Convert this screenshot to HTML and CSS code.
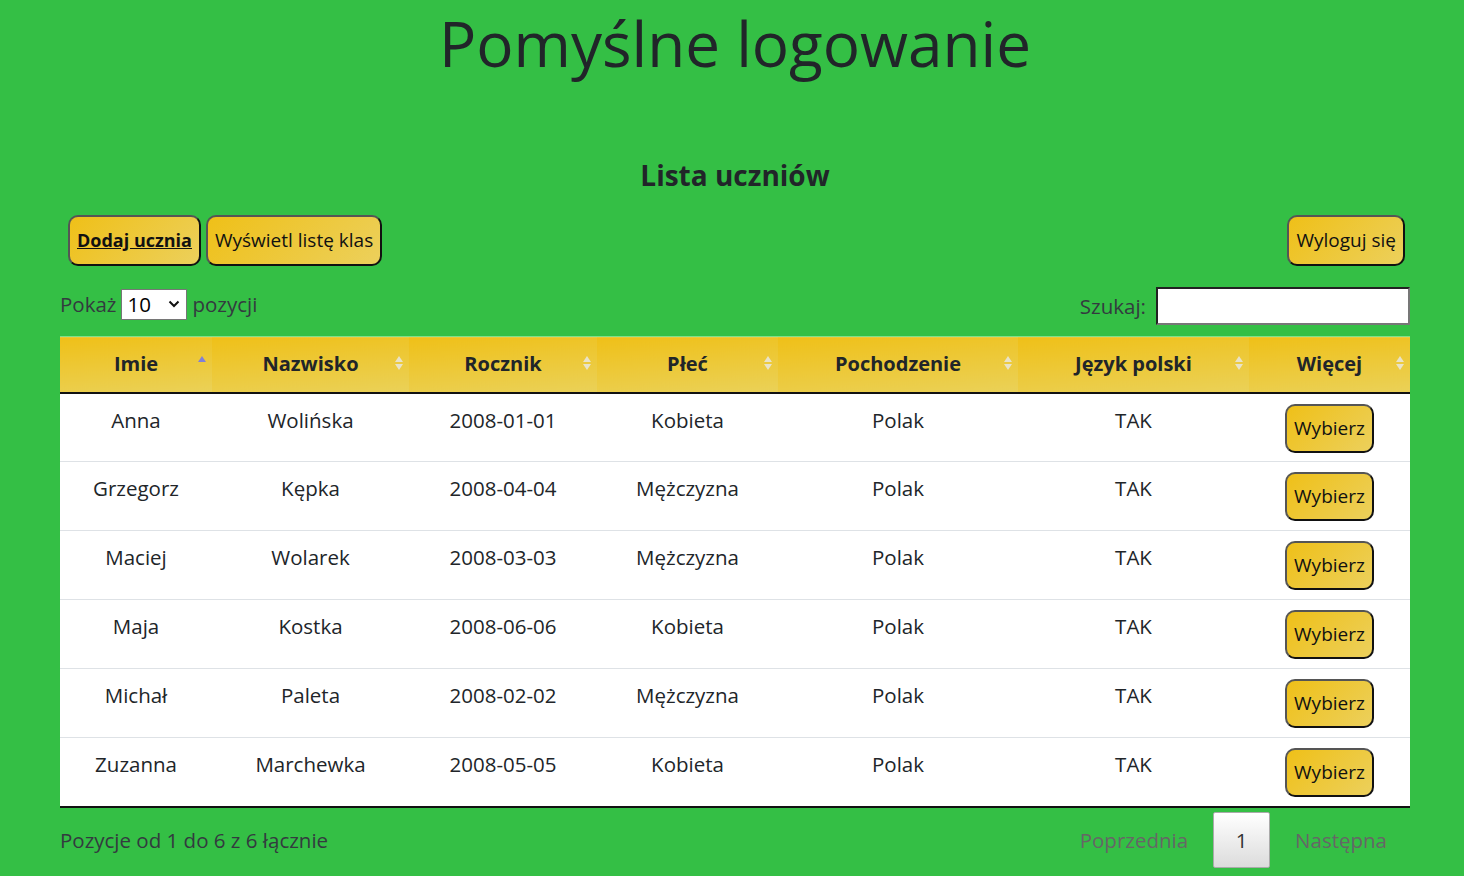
FILE: index.html
```html
<!DOCTYPE html>
<html lang="pl">
<head>
<meta charset="utf-8">
<title>Pomyślne logowanie</title>
<link rel="stylesheet" href="styles.css">
</head>
<body>
<div class="page">
  <h1 class="title">Pomyślne logowanie</h1>
  <h2 class="subtitle">Lista uczniów</h2>
  <div class="actions">
    <div class="actions-left">
      <button class="btn btn-active">Dodaj ucznia</button>
      <button class="btn">Wyświetl listę klas</button>
    </div>
    <button class="btn">Wyloguj się</button>
  </div>
  <div class="controls">
    <label class="length">Pokaż
      <span class="select"><span class="select-val">10</span><svg width="12" height="8" viewBox="0 0 12 8"><path d="M1.5 1.5 L6 6 L10.5 1.5" fill="none" stroke="#111" stroke-width="2"/></svg></span>
      pozycji</label>
    <label class="search">Szukaj: <span class="search-input"></span></label>
  </div>
  <table class="grid">
    <colgroup>
      <col style="width:152px"><col style="width:197px"><col style="width:188px"><col style="width:181px"><col style="width:240px"><col style="width:231px"><col style="width:161px">
    </colgroup>
    <thead>
      <tr>
        <th>Imie<span class="sort asc"></span></th>
        <th>Nazwisko<span class="sort"></span></th>
        <th>Rocznik<span class="sort"></span></th>
        <th>Płeć<span class="sort"></span></th>
        <th>Pochodzenie<span class="sort"></span></th>
        <th>Język polski<span class="sort"></span></th>
        <th>Więcej<span class="sort"></span></th>
      </tr>
    </thead>
    <tbody>
      <tr><td>Anna</td><td>Wolińska</td><td>2008-01-01</td><td>Kobieta</td><td>Polak</td><td>TAK</td><td><button class="btn btn-sm">Wybierz</button></td></tr>
      <tr><td>Grzegorz</td><td>Kępka</td><td>2008-04-04</td><td>Mężczyzna</td><td>Polak</td><td>TAK</td><td><button class="btn btn-sm">Wybierz</button></td></tr>
      <tr><td>Maciej</td><td>Wolarek</td><td>2008-03-03</td><td>Mężczyzna</td><td>Polak</td><td>TAK</td><td><button class="btn btn-sm">Wybierz</button></td></tr>
      <tr><td>Maja</td><td>Kostka</td><td>2008-06-06</td><td>Kobieta</td><td>Polak</td><td>TAK</td><td><button class="btn btn-sm">Wybierz</button></td></tr>
      <tr><td>Michał</td><td>Paleta</td><td>2008-02-02</td><td>Mężczyzna</td><td>Polak</td><td>TAK</td><td><button class="btn btn-sm">Wybierz</button></td></tr>
      <tr><td>Zuzanna</td><td>Marchewka</td><td>2008-05-05</td><td>Kobieta</td><td>Polak</td><td>TAK</td><td><button class="btn btn-sm">Wybierz</button></td></tr>
    </tbody>
  </table>
  <div class="footer">
    <div class="info">Pozycje od 1 do 6 z 6 łącznie</div>
    <div class="paging">
      <span class="page-link disabled">Poprzednia</span>
      <span class="page-current">1</span>
      <span class="page-link disabled">Następna</span>
    </div>
  </div>
</div>
</body>
</html>
```

FILE: styles.css
```css
* { box-sizing: border-box; }
html, body { margin: 0; padding: 0; }
body {
  background: #34bf45;
  color: #212529;
  font-family: "Open Sans", "Noto Sans", sans-serif;
  font-size: 20.5px;
  line-height: 30px;
  height: 876px;
  overflow: hidden;
}
.page {
  padding: 0 54px 0 60px;
}
.title {
  margin: 0;
  padding-top: 5px;
  font-size: 62px;
  line-height: 76px;
  font-weight: 400;
  text-align: center;
}
.subtitle {
  margin: 74px 0 0;
  font-size: 28px;
  line-height: 40px;
  font-weight: 700;
  text-align: center;
}
.actions {
  margin-top: 20px;
  display: flex;
  justify-content: space-between;
  padding: 0 5px 0 8px;
}
.actions-left { display: flex; gap: 5px; }
.btn {
  font-family: inherit;
  font-size: 19px;
  line-height: 30px;
  color: #111;
  padding: 8px 7px 9px;
  border: 2px solid;
  border-color: #555 #111 #111 #555;
  border-radius: 10px;
  background: linear-gradient(135deg, #efc018 0%, #ecd05c 100%);
  cursor: pointer;
}
.btn-active { font-weight: 700; text-decoration: underline; font-size: 18px; }
.btn-sm { padding: 7px 7px 8px; }
.controls {
  margin-top: 21px;
  display: flex;
  justify-content: space-between;
  align-items: flex-start;
  color: #333a3f;
}
.length { display: flex; align-items: center; gap: 5px; height: 32px; padding-top: 2px; }
.select {
  display: inline-flex;
  align-items: center;
  justify-content: space-between;
  width: 66px;
  height: 31px;
  background: #fff;
  border: 1px solid #767676;
  padding: 0 6px 0 5px;
  color: #000;
}
.search { display: flex; align-items: center; gap: 10px; padding-top: 0; }
.search-input {
  display: inline-block;
  width: 254px;
  height: 38px;
  background: #fff;
  border: 2px solid;
  border-color: #222 #777 #777 #222;
}
.grid {
  margin-top: 11px;
  width: 1350px;
  table-layout: fixed;
  border-collapse: collapse;
  border-top: 1px solid #7fe08a;
}
.grid th {
  position: relative;
  height: 56px;
  padding: 0 12px;
  background: linear-gradient(175deg, #efc018 0%, #ead158 100%);
  font-weight: 700;
  font-size: 20px;
  text-align: center;
  border-bottom: 2px solid #111;
}
.sort {
  position: absolute;
  right: 6px;
  top: 18px;
  width: 8px;
  height: 16px;
}
.sort::before, .sort::after {
  content: "";
  position: absolute;
  left: 0;
  border-left: 4px solid transparent;
  border-right: 4px solid transparent;
}
.sort::before { top: 1px; border-bottom: 6px solid #e9e3c8; }
.sort::after { top: 9px; border-top: 6px solid #e9e3c8; }
.sort.asc::before { border-bottom-color: #8080d8; }
.sort.asc::after { border-top-color: transparent; }
.grid td {
  background: #fff;
  text-align: center;
  vertical-align: top;
  padding: 11px 12px 8px;
  height: 69px;
  border-bottom: 1px solid #dee2e6;
}
.grid tbody tr:last-child td { border-bottom: 2px solid #111; }
.grid td .btn { margin-top: -1px; }
.footer {
  display: flex;
  justify-content: space-between;
  align-items: center;
  margin-top: 4px;
  color: #333a3f;
}
.paging { display: flex; align-items: center; margin-right: 10px; }
.page-link { color: #666; padding: 0 13px; }
.page-current {
  display: inline-flex;
  align-items: center;
  justify-content: center;
  width: 57px;
  height: 56px;
  margin: 0 12px;
  border: 1px solid #aaa;
  border-radius: 2px;
  background: linear-gradient(to bottom, #fff 0%, #dcdcdc 100%);
  color: #333;
}
```
